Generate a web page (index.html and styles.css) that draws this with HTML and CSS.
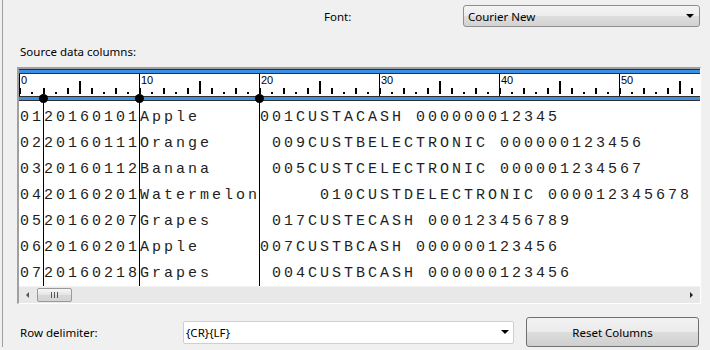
FILE: index.html
```html
<!DOCTYPE html>
<html lang="en">
<head>
    <meta charset="UTF-8">
    <title>Flat File Columns</title>
    <link rel="stylesheet" href="styles.css">
</head>
<body>
    <div class="page">

        <div class="font-row">
            <label class="font-label">Font:</label>
            <div class="dropdown">
                <span>Courier New</span>
                <i class="caret"></i>
            </div>
        </div>

        <div class="section-label">Source data columns:</div>

        <div class="frame">
            <div class="ruler">
                <div class="scale">
                    <span>0</span><span>10</span><span>20</span><span>30</span><span>40</span><span>50</span>
                </div>
            </div>

            <div class="data">
<div class="row">0120160101Apple     001CUSTACASH 000000012345</div>
<div class="row">0220160111Orange     009CUSTBELECTRONIC 000000123456</div>
<div class="row">0320160112Banana     005CUSTCELECTRONIC 000001234567</div>
<div class="row">0420160201Watermelon     010CUSTDELECTRONIC 000012345678</div>
<div class="row">0520160207Grapes     017CUSTECASH 000123456789</div>
<div class="row">0620160201Apple     007CUSTBCASH 000000123456</div>
<div class="row">0720160218Grapes     004CUSTBCASH 000000123456</div>
            </div>

            <div class="hscroll">
                <div class="arrow-btn"><i class="arrow-left"></i></div>
                <div class="thumb"><i class="grip"></i></div>
                <div class="track"></div>
                <div class="arrow-btn"><i class="arrow-right"></i></div>
            </div>

            <!-- column markers -->
            <div class="marker col-2"></div>
            <div class="marker col-10"></div>
            <div class="marker col-20"></div>
        </div>

        <div class="bottom-row">
            <label class="delim-label">Row delimiter:</label>
            <div class="combo">
                <span>{CR}{LF}</span>
                <i class="caret"></i>
            </div>
            <button class="reset-btn">Reset Columns</button>
        </div>

    </div>
</body>
</html>
```

FILE: styles.css
```css
body {
    margin: 0;
    padding: 0;
    background-color: #f0f0f0;
    font-family: 'Noto Sans', 'Liberation Sans', sans-serif;
    font-size: 11.5px;
    color: #000;
    overflow: hidden;
}

.page {
    margin-left: 2px;
    height: 347px;
    padding-top: 5px;
    border-left: 1px solid #a0a0a0;
    box-sizing: border-box;
}

/* top font picker */
.font-row {
    display: flex;
    align-items: center;
    height: 22px;
    padding-left: 321px;
}

.font-label {
    width: 139px;
}

.dropdown {
    display: flex;
    align-items: center;
    justify-content: space-between;
    width: 237px;
    height: 22px;
    padding: 0 5px 0 4px;
    box-sizing: border-box;
    border: 1px solid #8e8e8e;
    border-radius: 3px;
    background: linear-gradient(#f4f4f4, #ececec 50%, #dedede 50%, #d2d2d2);
}

.caret {
    width: 0;
    height: 0;
    border-left: 4px solid transparent;
    border-right: 4px solid transparent;
    border-top: 4px solid #000;
}

.section-label {
    margin-top: 17px;
    padding-left: 17px;
    line-height: 16px;
}

/* data frame */
.frame {
    position: relative;
    margin: 7px 0 0 14px;
    width: 684px;
    box-sizing: border-box;
    border-top: 2px solid #a0a0a0;
    border-left: 2px solid #a0a0a0;
    border-right: 1px solid #fff;
    border-bottom: 1px solid #fff;
}

.ruler {
    border-top: 1px solid #2e2e2e;
    border-bottom: 1px solid #2e2e2e;
    padding: 3px 0;
    background-color: #3b8fe4;
}

.scale {
    display: flex;
    height: 22px;
    overflow: hidden;
    border-top: 1px solid #2e2e2e;
    border-bottom: 1px solid #2e2e2e;
    background:
        repeating-linear-gradient(to right, #000 0 1px, transparent 1px 120px) 0 0 / 120px 100% repeat-x,
        repeating-linear-gradient(to right, transparent 0 60px, #000 60px 62px, transparent 62px 120px) left 0 bottom 2px / 120px 13px repeat-x,
        repeating-linear-gradient(to right, #000 0 2px, transparent 2px 24px) left 0 bottom 2px / 24px 6px repeat-x,
        repeating-linear-gradient(to right, transparent 0 12px, #000 12px 14px, transparent 14px 24px) left 0 bottom 2px / 24px 2px repeat-x,
        #fff;
}

.scale span {
    flex: 0 0 120px;
    padding-left: 2px;
    box-sizing: border-box;
    font-family: 'Liberation Sans', sans-serif;
    font-size: 11px;
    line-height: 12px;
}

.data {
    height: 185px;
    padding: 4px 0 0 1px;
    box-sizing: border-box;
    overflow: hidden;
    background-color: #fff;
}

.row {
    font-family: 'Liberation Mono', 'Courier New', monospace;
    font-size: 15px;
    letter-spacing: 3px;
    line-height: 26px;
    white-space: pre;
    color: #1e1e1e;
}

.hscroll {
    display: flex;
    height: 17px;
    background-color: #e8e8e8;
    border-top: 1px solid #f2f2f2;
    box-sizing: border-box;
}

.arrow-btn {
    flex: 0 0 17px;
    display: flex;
    align-items: center;
    justify-content: center;
}

.arrow-left {
    border-top: 3px solid transparent;
    border-bottom: 3px solid transparent;
    border-right: 3px solid #555;
}

.arrow-right {
    border-top: 3px solid transparent;
    border-bottom: 3px solid transparent;
    border-left: 3px solid #222;
}

.thumb {
    flex: 0 0 35px;
    display: flex;
    align-items: center;
    justify-content: center;
    margin: 1px 0;
    margin-left: 1px;
    border: 1px solid #9a9a9a;
    border-radius: 2px;
    background: linear-gradient(to bottom, #f6f6f6, #e4e4e4 50%, #d8d8d8 50%, #d4d4d4);
    box-sizing: border-box;
}

.grip {
    width: 7px;
    height: 6px;
    background: repeating-linear-gradient(to right, #555 0 1px, transparent 1px 3px);
}

.track {
    flex: 1;
}

/* column markers over the ruler and data */
.marker {
    position: absolute;
    top: 30px;
    width: 1px;
    height: 187px;
    background-color: #000;
}

.marker::before {
    content: '';
    position: absolute;
    top: -5px;
    left: -4px;
    width: 9px;
    height: 9px;
    border-radius: 50%;
    background-color: #000;
}

.col-2 { left: 24px; }
.col-10 { left: 120px; }
.col-20 { left: 240px; }

/* bottom controls */
.bottom-row {
    display: flex;
    align-items: center;
    height: 30px;
    margin-top: 13px;
    padding-left: 17px;
}

.delim-label {
    width: 163px;
}

.combo {
    display: flex;
    align-items: center;
    justify-content: space-between;
    width: 331px;
    height: 23px;
    padding: 0 4px 0 2px;
    box-sizing: border-box;
    border: 1px solid #cfcfcf;
    border-radius: 2px;
    background-color: #fff;
}

.reset-btn {
    width: 173px;
    height: 30px;
    margin-left: 12px;
    border: 1px solid #707070;
    border-radius: 3px;
    background: linear-gradient(#f2f2f2, #ebebeb 50%, #dddddd 50%, #cfcfcf);
    font-family: inherit;
    font-size: 11.5px;
    color: #000;
}
```
